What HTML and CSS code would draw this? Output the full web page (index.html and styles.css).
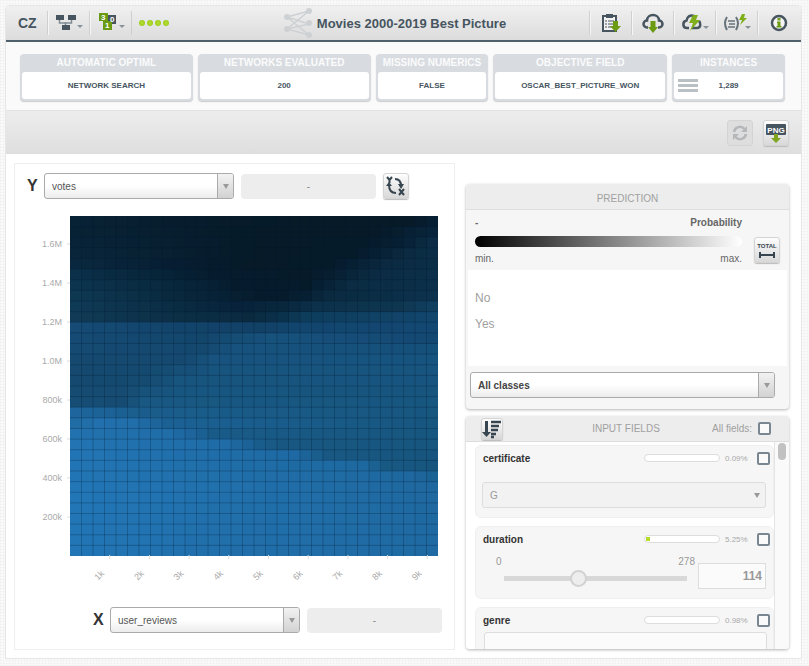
FILE: index.html
```html
<!DOCTYPE html>
<html lang="en">
<head>
  <meta charset="UTF-8" />
  <meta name="viewport" content="width=device-width, initial-scale=1.0"/>
  <title>Movies 2000-2019 Best Picture</title>
  <link rel="stylesheet" href="styles.css">
</head>
<body>
  <div class="page">
    <header class="topbar">
      <div class="tools">
        <span class="brand">CZ</span>
        <button class="tool" aria-label="Workflow">
          <svg width="28" height="22" viewBox="0 0 28 22">
            <path d="M4.500 6v5h12V6M10.500 10v4" fill="none" stroke="#7f8b92" stroke-width="1.500"/>
            <path d="M1 3h8v5H1zM13 3h8v5h-8zM7 13h8v5H7z" fill="#46555f"/>
            <path d="M22 13h6l-3 3z" fill="#87929a"/>
          </svg>
        </button>
        <button class="tool" aria-label="Sources">
          <svg width="28" height="22" viewBox="0 0 28 22">
            <path d="M11 3h8v9h-8z" fill="#46555f"/>
            <path d="M2 1h9v8H2zM6 9h9v9H6z" fill="#6b9a13"/>
            <text x="4" y="8" class="icon-num">3</text>
            <text x="13" y="10" class="icon-num">0</text>
            <text x="8" y="16" class="icon-num">1</text>
            <path d="M22 13h6l-3 3z" fill="#87929a"/>
          </svg>
        </button>
        <span class="dots"><i></i><i></i><i></i><i></i></span>
      </div>

      <h1 class="title">
        <svg width="30" height="30" viewBox="0 0 30 30">
          <g fill="none" stroke="#cdd1d3" stroke-width="1.500">
            <path d="M4 9L26 3M4 9l22 7M4 9l22 18M4 21L26 3M4 21l22-5M4 21l22 6"/>
          </g>
          <g fill="#cdd1d3">
            <circle cx="4" cy="9" r="3"/><circle cx="4" cy="21" r="3"/>
            <circle cx="26" cy="3" r="3"/><circle cx="26" cy="15" r="3"/><circle cx="26" cy="27" r="3"/>
          </g>
        </svg>
        Movies 2000-2019 Best Picture
      </h1>

      <div class="tools tools-right">
        <button class="tool" aria-label="Batch prediction">
          <svg width="22" height="22" viewBox="0 0 22 22">
            <path d="M3 4h13v15H3z" fill="#f2f2f2" stroke="#46555f" stroke-width="2"/>
            <path d="M6 2h7v4H6z" fill="#46555f"/>
            <path d="M5 9h2M8 9h6M5 12h2M8 12h6M5 15h2M8 15h4" stroke="#46555f"/>
            <path d="M13 9h5v5h3l-5.500 6L10 14h3z" fill="#6b9a13"/>
          </svg>
        </button>
        <button class="tool" aria-label="Download model">
          <svg width="22" height="22" viewBox="0 0 22 22">
            <path d="M6 15.500H5a3.500 3.500 0 0 1 0-7C5 5 8 3 11 3s6 2 6 5.500a3.500 3.500 0 0 1 0 7h-1" fill="none" stroke="#46555f" stroke-width="2.500"/>
            <path d="M8.500 9h5v6H16l-5 6-5-6h2.500z" fill="#6b9a13"/>
          </svg>
        </button>
        <button class="tool" aria-label="Cloud actions">
          <svg width="28" height="22" viewBox="0 0 28 22">
            <path d="M13 4C9 2.500 6 5 5.500 8.500c-4.500 1-4 7.500.500 7.500H8M11 16h5c4 0 4-5 2-7" fill="none" stroke="#46555f" stroke-width="2.500"/>
            <path d="M12 3h5l-2 5h4L9 19l3-8H8z" fill="#7fae1c"/>
            <path d="M22 14h6l-3 3z" fill="#87929a"/>
          </svg>
        </button>
        <button class="tool" aria-label="Scripts">
          <svg width="28" height="22" viewBox="0 0 28 22">
            <path d="M4 5Q0 11 4 18M13 5q4 6 0 13" fill="none" stroke="#66737b" stroke-width="2"/>
            <path d="M5 9h7M6 12h6M5 15h7" stroke="#66737b" stroke-width="1.500"/>
            <path d="M19 2h3l-1 4h3l-7 7 2-5h-3z" fill="#7fae1c"/>
            <path d="M22 14h6l-3 3z" fill="#87929a"/>
          </svg>
        </button>
        <button class="tool" aria-label="Info">
          <svg width="20" height="20" viewBox="0 0 20 20">
            <circle cx="10" cy="10" r="7" fill="#f4f4f4" stroke="#46555f" stroke-width="2.500"/>
            <path d="M8.500 5h3v2.500h-3zM8 8.500h3.500V13h1v1.500H7.500V13h1v-3H8z" fill="#6b9a13"/>
          </svg>
        </button>
      </div>
    </header>

    <section class="facts">
      <div class="fact"><h2>AUTOMATIC OPTIML</h2><p>NETWORK SEARCH</p></div>
      <div class="fact"><h2>NETWORKS EVALUATED</h2><p>200</p></div>
      <div class="fact"><h2>MISSING NUMERICS</h2><p>FALSE</p></div>
      <div class="fact"><h2>OBJECTIVE FIELD</h2><p>OSCAR_BEST_PICTURE_WON</p></div>
      <div class="fact fact-rows">
        <h2>INSTANCES</h2>
        <p><span class="lines"><i></i><i></i><i></i></span>1,289</p>
      </div>
    </section>

    <div class="actions">
      <button class="btn" disabled aria-label="Refresh">
        <svg width="18" height="18" viewBox="0 0 18 18">
          <path d="M3 8a6 6 0 0 1 10.500-3M15 10a6 6 0 0 1-10.500 3" fill="none" stroke="#b5b8ba" stroke-width="2.500"/>
          <path d="M16 2v6h-6zM2 16v-6h6z" fill="#b5b8ba"/>
        </svg>
      </button>
      <button class="btn" aria-label="Export PNG">
        <svg width="20" height="20" viewBox="0 0 20 20">
          <rect x="0" y="1" width="20" height="11" rx="1" fill="#46555f"/>
          <text x="10" y="10" class="icon-png">PNG</text>
          <path d="M8 11h4v4h3l-5 5-5-5h3z" fill="#7fa51f"/>
        </svg>
      </button>
    </div>

    <main class="main">
      <section class="panel chart-panel">
        <div class="axis-row">
          <label class="axis" for="yField">Y</label>
          <div class="picker axis-picker">
            <select id="yField"><option>votes</option></select>
            <span class="arrow"></span>
          </div>
          <div class="range">-</div>
          <button class="btn" aria-label="Swap axes">
            <svg width="20" height="20" viewBox="0 0 20 20">
              <path d="M9 3q6 0 6 7M3 9q0 8 7 8" fill="none" stroke="#36454f" stroke-width="2"/>
              <path d="M12 8h6l-3 5zM0 10h6L3 6z" fill="#36454f"/>
              <path d="M1 1l2.500 3L6 1M3.500 4v3M13 13l5 6M18 13l-5 6" fill="none" stroke="#36454f" stroke-width="2"/>
            </svg>
          </button>
        </div>

        <svg class="heatmap" id="heatmap" viewBox="0 0 400 376"></svg>

        <div class="axis-row axis-row-x">
          <label class="axis" for="xField">X</label>
          <div class="picker axis-picker">
            <select id="xField"><option>user_reviews</option></select>
            <span class="arrow"></span>
          </div>
          <div class="range">-</div>
        </div>
      </section>

      <div class="side">
        <section class="card">
          <h2 class="card-head">PREDICTION</h2>
          <div class="legend">
            <div class="scale">
              <div class="scale-text strong"><span>-</span><span>Probability</span></div>
              <div class="scale-bar"></div>
              <div class="scale-text"><span>min.</span><span>max.</span></div>
            </div>
            <button class="btn" aria-label="Total range">
              <svg width="22" height="20" viewBox="0 0 22 20">
                <text x="11" y="8" class="icon-total">TOTAL</text>
                <path d="M4 15h14M4 12v6M18 12v6" stroke="#36454f" stroke-width="2"/>
              </svg>
            </button>
          </div>
          <ul class="classes">
            <li>No</li>
            <li>Yes</li>
          </ul>
          <div class="picker class-picker">
            <select aria-label="Classes"><option>All classes</option></select>
            <span class="arrow"></span>
          </div>
        </section>

        <section class="card">
          <div class="card-head fields-head">
            <button class="btn btn-small" aria-label="Sort fields">
              <svg width="20" height="20" viewBox="0 0 20 20">
                <path d="M4.500 2v13" stroke="#36454f" stroke-width="3"/>
                <path d="M0 13h9l-4.500 5z" fill="#36454f"/>
                <path d="M9 3h10M9 7h8M9 11h7M9 15h5M9 18h3" stroke="#36454f" stroke-width="2.500"/>
              </svg>
            </button>
            <h2>INPUT FIELDS</h2>
            <label class="all">All fields: <input type="checkbox"></label>
          </div>
          <div class="fields">
            <div class="field-list">
              <div class="field">
                <div class="field-head">
                  <label for="certOn">certificate</label>
                  <span class="meter"></span>
                  <span class="pct">0.09%</span>
                  <input type="checkbox" id="certOn">
                </div>
                <div class="picker flat">
                  <select aria-label="certificate value"><option>G</option></select>
                  <span class="arrow"></span>
                </div>
              </div>
              <div class="field">
                <div class="field-head">
                  <label for="durOn">duration</label>
                  <span class="meter"><i style="width: 5%"></i></span>
                  <span class="pct">5.25%</span>
                  <input type="checkbox" id="durOn">
                </div>
                <div class="slider-row">
                  <div class="slider">
                    <div class="ends"><span>0</span><span>278</span></div>
                    <input type="range" min="0" max="278" value="110" aria-label="duration">
                  </div>
                  <input type="text" class="num" value="114" aria-label="duration value">
                </div>
              </div>
              <div class="field">
                <div class="field-head">
                  <label for="genreOn">genre</label>
                  <span class="meter"></span>
                  <span class="pct">0.98%</span>
                  <input type="checkbox" id="genreOn">
                </div>
                <textarea class="items" aria-label="genre value"></textarea>
              </div>
            </div>
            <div class="scroll"><i></i></div>
          </div>
        </section>
      </div>
    </main>
  </div>

  <script src="heatmap.js"></script>
</body>
</html>
```

FILE: heatmap.js
```javascript
// colour stops for each row: [column, colour], rows without stops are blended
const rows = {
  0: [[0, "082235"], [10, "071c2c"], [20, "061a28"], [29, "061a28"], [31, "071f33"]],
  1: [[0, "082235"], [16, "061a28"], [26, "061a28"], [31, "08243a"]],
  2: [[0, "082338"], [16, "061a28"], [25, "061b2a"], [28, "071f33"], [31, "0b2c44"]],
  3: [[0, "09253a"], [16, "061a28"], [24, "061b2a"], [26, "071f33"], [29, "0b2b42"], [31, "0b2e46"]],
  4: [[0, "09283f"], [8, "071e32"], [15, "061a28"], [22, "061b2a"], [24, "071f33"], [27, "0b2a41"], [31, "0b2e47"]],
  5: [[0, "0b3049"], [5, "08283e"], [12, "061c2d"], [20, "061a29"], [22, "071e30"], [26, "0b2b43"], [31, "0c3049"]],
  6: [[0, "0d344e"], [8, "08283e"], [14, "061c2d"], [20, "061b2a"], [21, "071f32"], [24, "0b2c43"], [31, "0c304a"]],
  7: [[0, "0e3852"], [5, "0b3047"], [10, "08253a"], [17, "061b2b"], [20, "071f32"], [22, "0a2a40"], [31, "0c324d"]],
  8: [[0, "0f3a56"], [9, "0a2c43"], [14, "07223a"], [18, "08273d"], [21, "0c314a"], [28, "0e3650"], [31, "103f5f"]],
  9: [[0, "103a56"], [8, "0c3047"], [15, "0a2a40"], [18, "0b324c"], [20, "0e3d5c"], [31, "12466c"]],
  10: [[0, "154b75"], [10, "12436a"], [16, "124166"], [20, "12466f"], [31, "134873"]],
  11: [[0, "154a74"], [11, "13466b"], [14, "154d75"], [17, "16527c"], [24, "164d78"], [31, "134872"]],
  12: [[0, "154a72"], [11, "15486f"], [14, "17527e"], [31, "15507a"]],
  13: [[0, "15496f"], [9, "15496f"], [12, "17537e"], [31, "16537e"]],
  15: [[0, "15496f"], [6, "154b71"], [9, "17547e"], [31, "17547f"]],
  17: [[0, "164d74"], [4, "164c73"], [6, "185882"], [31, "17567f"]],
  18: [[0, "1d659c"], [3, "1c6296"], [6, "1a5d8c"], [31, "17567f"]],
  19: [[0, "206ca4"], [2, "2270ae"], [5, "216eaa"], [8, "1b6194"], [31, "17567f"]],
  20: [[0, "2272af"], [8, "206da8"], [10, "1d659c"], [12, "195b88"], [31, "17567f"]],
  21: [[0, "2274b2"], [13, "1f6ca7"], [16, "195d8d"], [18, "185781"], [31, "17567f"]],
  22: [[0, "2275b4"], [19, "1e69a3"], [20, "1c6397"], [22, "185882"], [31, "17557e"]],
  23: [[0, "2275b4"], [25, "1d689f"], [27, "185983"], [31, "17557e"]],
  24: [[0, "2275b4"], [29, "1e689f"], [31, "1b6294"]],
  25: [[0, "2276b6"], [31, "1f689f"]],
  31: [[0, "2276b6"], [12, "216fab"], [31, "1f6aa3"]]
};

const SIZE = 32;
const plot = { x: 32, y: 1, w: 368, h: 340 };
const cellW = plot.w / SIZE;
const cellH = plot.h / SIZE;

function toRgb(hex) {
  return [0, 2, 4].map(i => parseInt(hex.substr(i, 2), 16));
}

function mix(a, b, t) {
  return a.map((v, i) => v + (b[i] - v) * t);
}

function colorInRow(stops, col) {
  for (let i = 1; i < stops.length; i++) {
    const [c0, h0] = stops[i - 1];
    const [c1, h1] = stops[i];
    if (col <= c1) return mix(toRgb(h0), toRgb(h1), (col - c0) / (c1 - c0));
  }
}

function cellColor(col, row) {
  let lo = row;
  let hi = row;
  while (!rows[lo]) lo--;
  while (!rows[hi]) hi++;
  const a = colorInRow(rows[lo], col);
  if (lo === hi) return a;
  return mix(a, colorInRow(rows[hi], col), (row - lo) / (hi - lo));
}

let svg = "";
for (let r = 0; r < SIZE; r++) {
  for (let c = 0; c < SIZE; c++) {
    const rgb = cellColor(c, r).map(Math.round).join(",");
    svg += `<rect class="cell" x="${plot.x + c * cellW}" y="${plot.y + r * cellH}" width="${cellW}" height="${cellH}" fill="rgb(${rgb})"/>`;
  }
}

// grid
for (let i = 1; i < SIZE; i++) {
  const x = plot.x + i * cellW;
  const y = plot.y + i * cellH;
  svg += `<path class="grid" d="M${x} ${plot.y}v${plot.h}M${plot.x} ${y}h${plot.w}"/>`;
}

// axis labels
["1.6M", "1.4M", "1.2M", "1.0M", "800k", "600k", "400k", "200k"].forEach((t, i) => {
  const y = 29 + i * 39;
  svg += `<text class="tick" x="24" y="${y + 3}" text-anchor="end">${t}</text>`;
  svg += `<path class="mark" d="M29 ${y}h3"/>`;
});
for (let i = 1; i <= 9; i++) {
  const x = 32 + i * 39.7;
  svg += `<text class="tick" transform="translate(${x - 5} 359) rotate(-45)" text-anchor="end">${i}k</text>`;
  svg += `<path class="mark" d="M${x} 340v4"/>`;
}

document.getElementById("heatmap").innerHTML = svg;
```

FILE: styles.css
```css
* {
  box-sizing: border-box;
}

body {
  margin: 0;
  padding: 5px 7px 6px 5px;
  font-family: "Liberation Sans", Arial, sans-serif;
  font-size: 11px;
  color: #555;
  background-color: #fafafa;
  background-image:
    repeating-linear-gradient(90deg, rgba(0,0,0,0.02) 0 1px, transparent 1px 3px),
    repeating-linear-gradient(rgba(0,0,0,0.02) 0 1px, transparent 1px 3px);
}

h1, h2, p, ul {
  margin: 0;
  padding: 0;
}

button, input, select, textarea {
  font-family: inherit;
  margin: 0;
}

.page {
  background: #fff;
  border: 1px solid #e6e6e6;
  border-radius: 4px 4px 0 0;
}

/* top bar */
.topbar {
  display: grid;
  grid-template-columns: 1fr auto 1fr;
  align-items: center;
  height: 36px;
  background: linear-gradient(#f0f0f0, #dcdcdc);
  border-bottom: 2px solid #51616b;
  border-radius: 4px 4px 0 0;
}

.tools {
  display: flex;
  align-items: center;
}

.tools-right {
  justify-content: flex-end;
  padding-right: 2px;
}

.brand {
  width: 41px;
  padding-left: 12px;
  font-size: 14px;
  font-weight: bold;
  color: #46555f;
}

.tool {
  display: flex;
  align-items: center;
  justify-content: center;
  width: 42px;
  height: 24px;
  padding: 0;
  border: 0;
  border-left: 1px solid #cfcfcf;
  background: none;
  box-shadow: inset 1px 0 #f6f6f6;
}

.dots {
  display: flex;
  align-items: center;
  gap: 2px;
  height: 24px;
  padding-left: 7px;
  border-left: 1px solid #cfcfcf;
}

.dots i {
  width: 6px;
  height: 6px;
  border-radius: 3px;
  background: radial-gradient(#b5e02f, #92c41a);
}

.title {
  display: flex;
  align-items: center;
  gap: 4px;
  padding-right: 18px;
  font-size: 13px;
  color: #46555f;
  white-space: nowrap;
}

.icon-num {
  font-size: 8px;
  font-weight: bold;
  fill: #fff;
}

.icon-png {
  font-size: 8px;
  font-weight: bold;
  fill: #fff;
  text-anchor: middle;
}

.icon-total {
  font-size: 6px;
  font-weight: bold;
  fill: #36454f;
  text-anchor: middle;
}

/* facts */
.facts {
  display: grid;
  grid-template-columns: 173fr 173fr 113fr 174fr 113fr;
  gap: 5px;
  padding: 12px 16px 9px 14px;
  background: #fafafa;
  border-bottom: 1px solid #e2e2e2;
}

.fact {
  min-width: 0;
  padding: 0 2px 2px;
  background: #d8dce1;
  border-radius: 4px;
  box-shadow: 0 1px 1px #ccc;
  text-align: center;
}

.fact h2 {
  font-size: 10px;
  line-height: 18px;
  color: #fbfbfb;
  white-space: nowrap;
}

.fact p {
  display: flex;
  align-items: center;
  justify-content: center;
  height: 27px;
  border-radius: 3px;
  background: #fff;
  font-size: 8px;
  font-weight: bold;
  color: #46555f;
}

.fact-rows p {
  display: grid;
  grid-template-columns: 20px 1fr 20px;
  padding: 0 4px;
}

.lines {
  display: grid;
  gap: 2px;
}

.lines i {
  height: 3px;
  background: #b9c1c4;
}

.actions {
  display: flex;
  justify-content: flex-end;
  align-items: center;
  gap: 10px;
  height: 43px;
  padding-right: 12px;
  background: linear-gradient(#ededed, #dedede);
}

.btn {
  display: flex;
  align-items: center;
  justify-content: center;
  flex: none;
  width: 26px;
  height: 26px;
  padding: 0;
  border: 1px solid #d4d4d4;
  border-radius: 3px;
  background: linear-gradient(#fdfdfd, #d8d8d8);
  box-shadow: 0 1px 1px #bbb;
}

.btn:disabled {
  background: #dedede;
  box-shadow: none;
}

.btn-small {
  width: 22px;
  height: 22px;
}

/* main */
.main {
  display: grid;
  grid-template-columns: 441fr 323fr;
  gap: 11px;
  padding: 9px 12px 8px 8px;
}

.chart-panel {
  padding: 9px 12px 16px;
  border: 1px solid #eee;
}

.axis-row {
  display: flex;
  align-items: center;
  gap: 7px;
}

.axis {
  width: 10px;
  font-size: 16px;
  font-weight: bold;
  color: #333;
}

.range {
  flex: 0 1 135px;
  border-radius: 4px;
  background: #ededed;
  font-size: 10px;
  line-height: 25px;
  color: #888;
  text-align: center;
}

.axis-row-x {
  justify-content: flex-end;
  margin-top: 16px;
}

.heatmap {
  display: block;
  width: 100%;
  margin-top: 16px;
  padding: 0 4px 0 11px;
}

.cell {
  shape-rendering: crispEdges;
}

.grid {
  fill: none;
  stroke: rgba(0,25,45,0.26);
}

.tick {
  font-size: 9px;
  fill: #aaa;
}

.mark {
  stroke: #ddd;
}

/* selects */
.picker {
  display: grid;
  grid-template-columns: 1fr 16px;
  height: 26px;
  border: 1px solid #aaa;
  border-radius: 3px;
  background: linear-gradient(#fff 50%, #ececec);
  overflow: hidden;
}

.axis-picker {
  flex: 0 1 190px;
}

.picker select {
  grid-area: 1 / 1 / 2 / 3;
  width: 100%;
  padding: 0 22px 0 7px;
  border: 0;
  appearance: none;
  background: none;
  font-size: 10px;
  color: #555;
}

.arrow {
  grid-area: 1 / 2;
  display: grid;
  place-items: center;
  border-left: 1px solid #aaa;
  background: linear-gradient(#f2f2f2, #d2d2d2);
  pointer-events: none;
}

.arrow::after {
  content: "";
  border: 3px solid transparent;
  border-top: 5px solid #999;
  border-bottom: 0;
}

.class-picker {
  margin: 6px 14px 11px 4px;
}

.class-picker select {
  font-weight: bold;
  color: #444;
}

.flat {
  border-color: #ddd;
  background: #f2f2f2;
}

.flat select {
  color: #999;
}

.flat .arrow {
  border: 0;
  background: none;
}

/* side */
.side {
  display: flex;
  flex-direction: column;
  gap: 7px;
  min-width: 0;
  padding-top: 21px;
}

.card {
  border-radius: 4px;
  background: #f6f6f6;
  box-shadow: 0 1px 3px rgba(0,0,0,0.3);
  overflow: hidden;
}

.card-head {
  height: 26px;
  border-bottom: 1px solid #ddd;
  background: #ededed;
  font-size: 10px;
  font-weight: normal;
  line-height: 29px;
  color: #a0a0a0;
  text-align: center;
}

.legend {
  display: flex;
  align-items: center;
  gap: 12px;
  height: 60px;
  padding: 2px 9px 0;
}

.scale {
  flex: 1;
}

.scale-text {
  display: flex;
  justify-content: space-between;
  font-size: 10px;
  line-height: 20px;
  color: #666;
}

.strong {
  font-weight: bold;
}

.scale-bar {
  height: 11px;
  margin: 3px 0 2px;
  border-radius: 6px;
  background: linear-gradient(90deg, #000, #fff);
}

.legend .btn {
  margin-top: 18px;
}

.classes {
  height: 96px;
  margin: 0 2px;
  padding: 15px 7px;
  background: #fff;
  list-style: none;
  font-size: 12px;
  line-height: 26px;
  color: #a0a0a0;
}

.fields-head {
  display: grid;
  grid-template-columns: 1fr auto 1fr;
  grid-template-rows: 25px;
  align-items: center;
  padding: 0 18px 0 15px;
}

.fields-head h2 {
  font-size: 10px;
  font-weight: normal;
}

.all {
  display: flex;
  align-items: center;
  justify-content: flex-end;
  gap: 6px;
}

input[type="checkbox"] {
  flex: none;
  width: 13px;
  height: 13px;
  appearance: none;
  border: 2px solid #7b8790;
  border-radius: 2px;
  background: #fafafa;
}

.fields {
  display: grid;
  grid-template-columns: 1fr 15px;
  height: 207px;
  background: #fff;
}

.field-list {
  display: flex;
  flex-direction: column;
  gap: 8px;
  min-height: 0;
  padding: 3px 0 0 9px;
  overflow: hidden;
}

.field {
  flex: none;
  height: 73px;
  border: 1px solid #efefef;
  border-radius: 6px;
  background: #f6f6f6;
}

.field-head {
  display: flex;
  align-items: center;
  gap: 5px;
  height: 24px;
  padding: 0 3px 0 7px;
}

.field-head label {
  flex: 1;
  font-size: 10px;
  font-weight: bold;
  color: #333;
}

.meter {
  width: 76px;
  height: 8px;
  padding: 1px;
  border: 1px solid #ddd;
  border-radius: 4px;
  background: #fff;
}

.meter i {
  display: block;
  height: 4px;
  background: #b5db2b;
}

.pct {
  width: 27px;
  font-size: 8px;
  color: #aaa;
}

.field .flat {
  margin: 12px 7px 0 6px;
}

.slider-row {
  display: flex;
  gap: 11px;
  padding: 4px 7px 0 28px;
}

.slider {
  flex: 1;
}

.ends {
  display: flex;
  justify-content: space-between;
  margin: 0 -8px;
  font-size: 10px;
  line-height: 14px;
  color: #999;
}

input[type="range"] {
  display: block;
  width: 100%;
  height: 18px;
  appearance: none;
  background: linear-gradient(#d8d8d8, #d8d8d8) center / 100% 5px no-repeat;
}

input[type="range"]::-webkit-slider-thumb {
  width: 17px;
  height: 17px;
  appearance: none;
  border: 2px solid #d2d2d2;
  border-radius: 50%;
  background: #eee;
}

.num {
  width: 68px;
  height: 26px;
  margin-top: 8px;
  padding: 0 3px;
  border: 1px solid #ddd;
  background: #fbfbfb;
  font-size: 12px;
  font-weight: bold;
  color: #999;
  text-align: right;
}

.items {
  display: block;
  width: calc(100% - 14px);
  height: 40px;
  margin-left: 8px;
  border: 1px solid #ddd;
  border-radius: 3px;
  background: #fbfbfb;
  resize: none;
}

.scroll {
  padding: 1px 3px;
  border-left: 1px solid #e4e4e4;
  background: #fafafa;
}

.scroll i {
  display: block;
  width: 8px;
  height: 17px;
  border-radius: 4px;
  background: #c1c1c1;
}
```
